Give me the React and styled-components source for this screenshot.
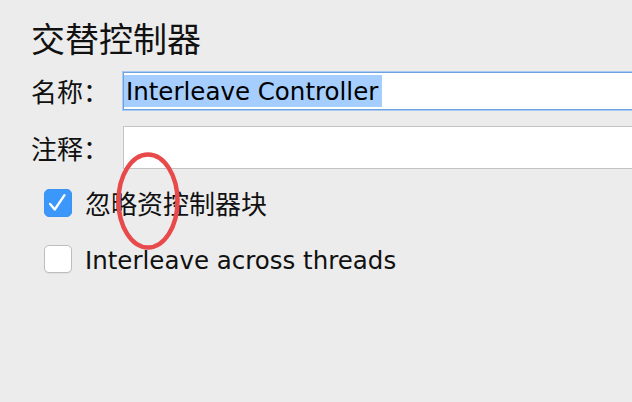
import React from "react";
import styled, { createGlobalStyle } from "styled-components";

const Global = createGlobalStyle`
  html, body {
    margin: 0;
    padding: 0;
    background: #ececec;
    overflow: hidden;
  }
  body {
    font-family: "DejaVu Sans", "Noto Sans CJK SC", sans-serif;
    color: #111;
  }
`;

const Page = styled.div`
  position: relative;
  width: 632px;
  height: 402px;
  padding: 20px 0 0 31px;
  box-sizing: border-box;
  overflow: hidden;
`;

const Title = styled.h1`
  margin: 0;
  font-family: "Noto Sans CJK SC", sans-serif;
  font-weight: 400;
  font-size: 34px;
  line-height: 36px;
  color: #111;
`;

const Form = styled.div`
  display: grid;
  grid-template-columns: 92px 1fr;
  row-gap: 16px;
  align-items: center;
  margin-top: 16px;
  margin-right: -40px;
`;

const Label = styled.label`
  font-family: "Noto Sans CJK SC", sans-serif;
  font-size: 26px;
  line-height: 30px;
  color: #111;
  white-space: nowrap;
`;

const NameField = styled.div`
  height: 38px;
  box-sizing: border-box;
  background: #fff;
  border: 1px solid #6ea2dc;
  box-shadow: 0 0 0 1px #a9cbf2;
  padding: 2px 0 0 0;
  display: flex;
  align-items: flex-start;
`;

const Selected = styled.span`
  display: inline-block;
  background: #a5cdfd;
  font-family: "DejaVu Sans", sans-serif;
  font-size: 24.5px;
  line-height: 34px;
  height: 32px;
  padding: 0 4px 0 2px;
  color: #000;
  white-space: nowrap;
`;

const CommentField = styled.div`
  height: 43px;
  box-sizing: border-box;
  background: #fff;
  border: 1px solid #c3c3c3;
`;

const Checks = styled.div`
  display: flex;
  flex-direction: column;
  gap: 28px;
  margin-top: 20px;
  padding-left: 13px;
`;

const CheckRow = styled.div`
  display: flex;
  align-items: center;
  gap: 13px;
  height: 28px;
`;

const Box = styled.span`
  width: 28px;
  height: 28px;
  box-sizing: border-box;
  border-radius: 5px;
  flex: none;
  display: flex;
  align-items: center;
  justify-content: center;
  background: ${(p) => (p.$checked ? "#3b98fa" : "#ffffff")};
  border: 1px solid ${(p) => (p.$checked ? "#3a93f3" : "#bdbdbd")};
  box-shadow: ${(p) => (p.$checked ? "none" : "0 1px 1px rgba(0,0,0,0.06)")};
`;

const CheckText = styled.span`
  font-family: ${(p) =>
    p.$cjk ? '"Noto Sans CJK SC", sans-serif' : '"DejaVu Sans", sans-serif'};
  font-size: ${(p) => (p.$cjk ? "26px" : "24.5px")};
  line-height: 30px;
  padding-top: ${(p) => (p.$cjk ? "0" : "3px")};
  color: #111;
  white-space: nowrap;
`;

const Annotation = styled.svg`
  position: absolute;
  left: 114px;
  top: 150px;
  pointer-events: none;
`;

function Checkbox({ checked, cjk, children }) {
  return (
    <CheckRow>
      <Box $checked={checked}>
        {checked && (
          <svg width="28" height="28" viewBox="0 0 28 28">
            <path
              d="M5.5 15 L10.5 21 L21 5.5"
              fill="none"
              stroke="#fff"
              strokeWidth="2.5"
              strokeLinecap="round"
              strokeLinejoin="round"
            />
          </svg>
        )}
      </Box>
      <CheckText $cjk={cjk}>{children}</CheckText>
    </CheckRow>
  );
}

export default function App() {
  return (
    <>
      <Global />
      <Page>
        <Title>交替控制器</Title>
        <Form>
          <Label>名称：</Label>
          <NameField>
            <Selected>Interleave Controller</Selected>
          </NameField>
          <Label>注释：</Label>
          <CommentField />
        </Form>
        <Checks>
          <Checkbox checked cjk>
            忽略资控制器块
          </Checkbox>
          <Checkbox>Interleave across threads</Checkbox>
        </Checks>
        <Annotation width="68" height="102" viewBox="0 0 68 102">
          <ellipse
            cx="34"
            cy="51"
            rx="29.5"
            ry="46.5"
            fill="none"
            stroke="#e84a4b"
            strokeWidth="4.5"
          />
        </Annotation>
      </Page>
    </>
  );
}
